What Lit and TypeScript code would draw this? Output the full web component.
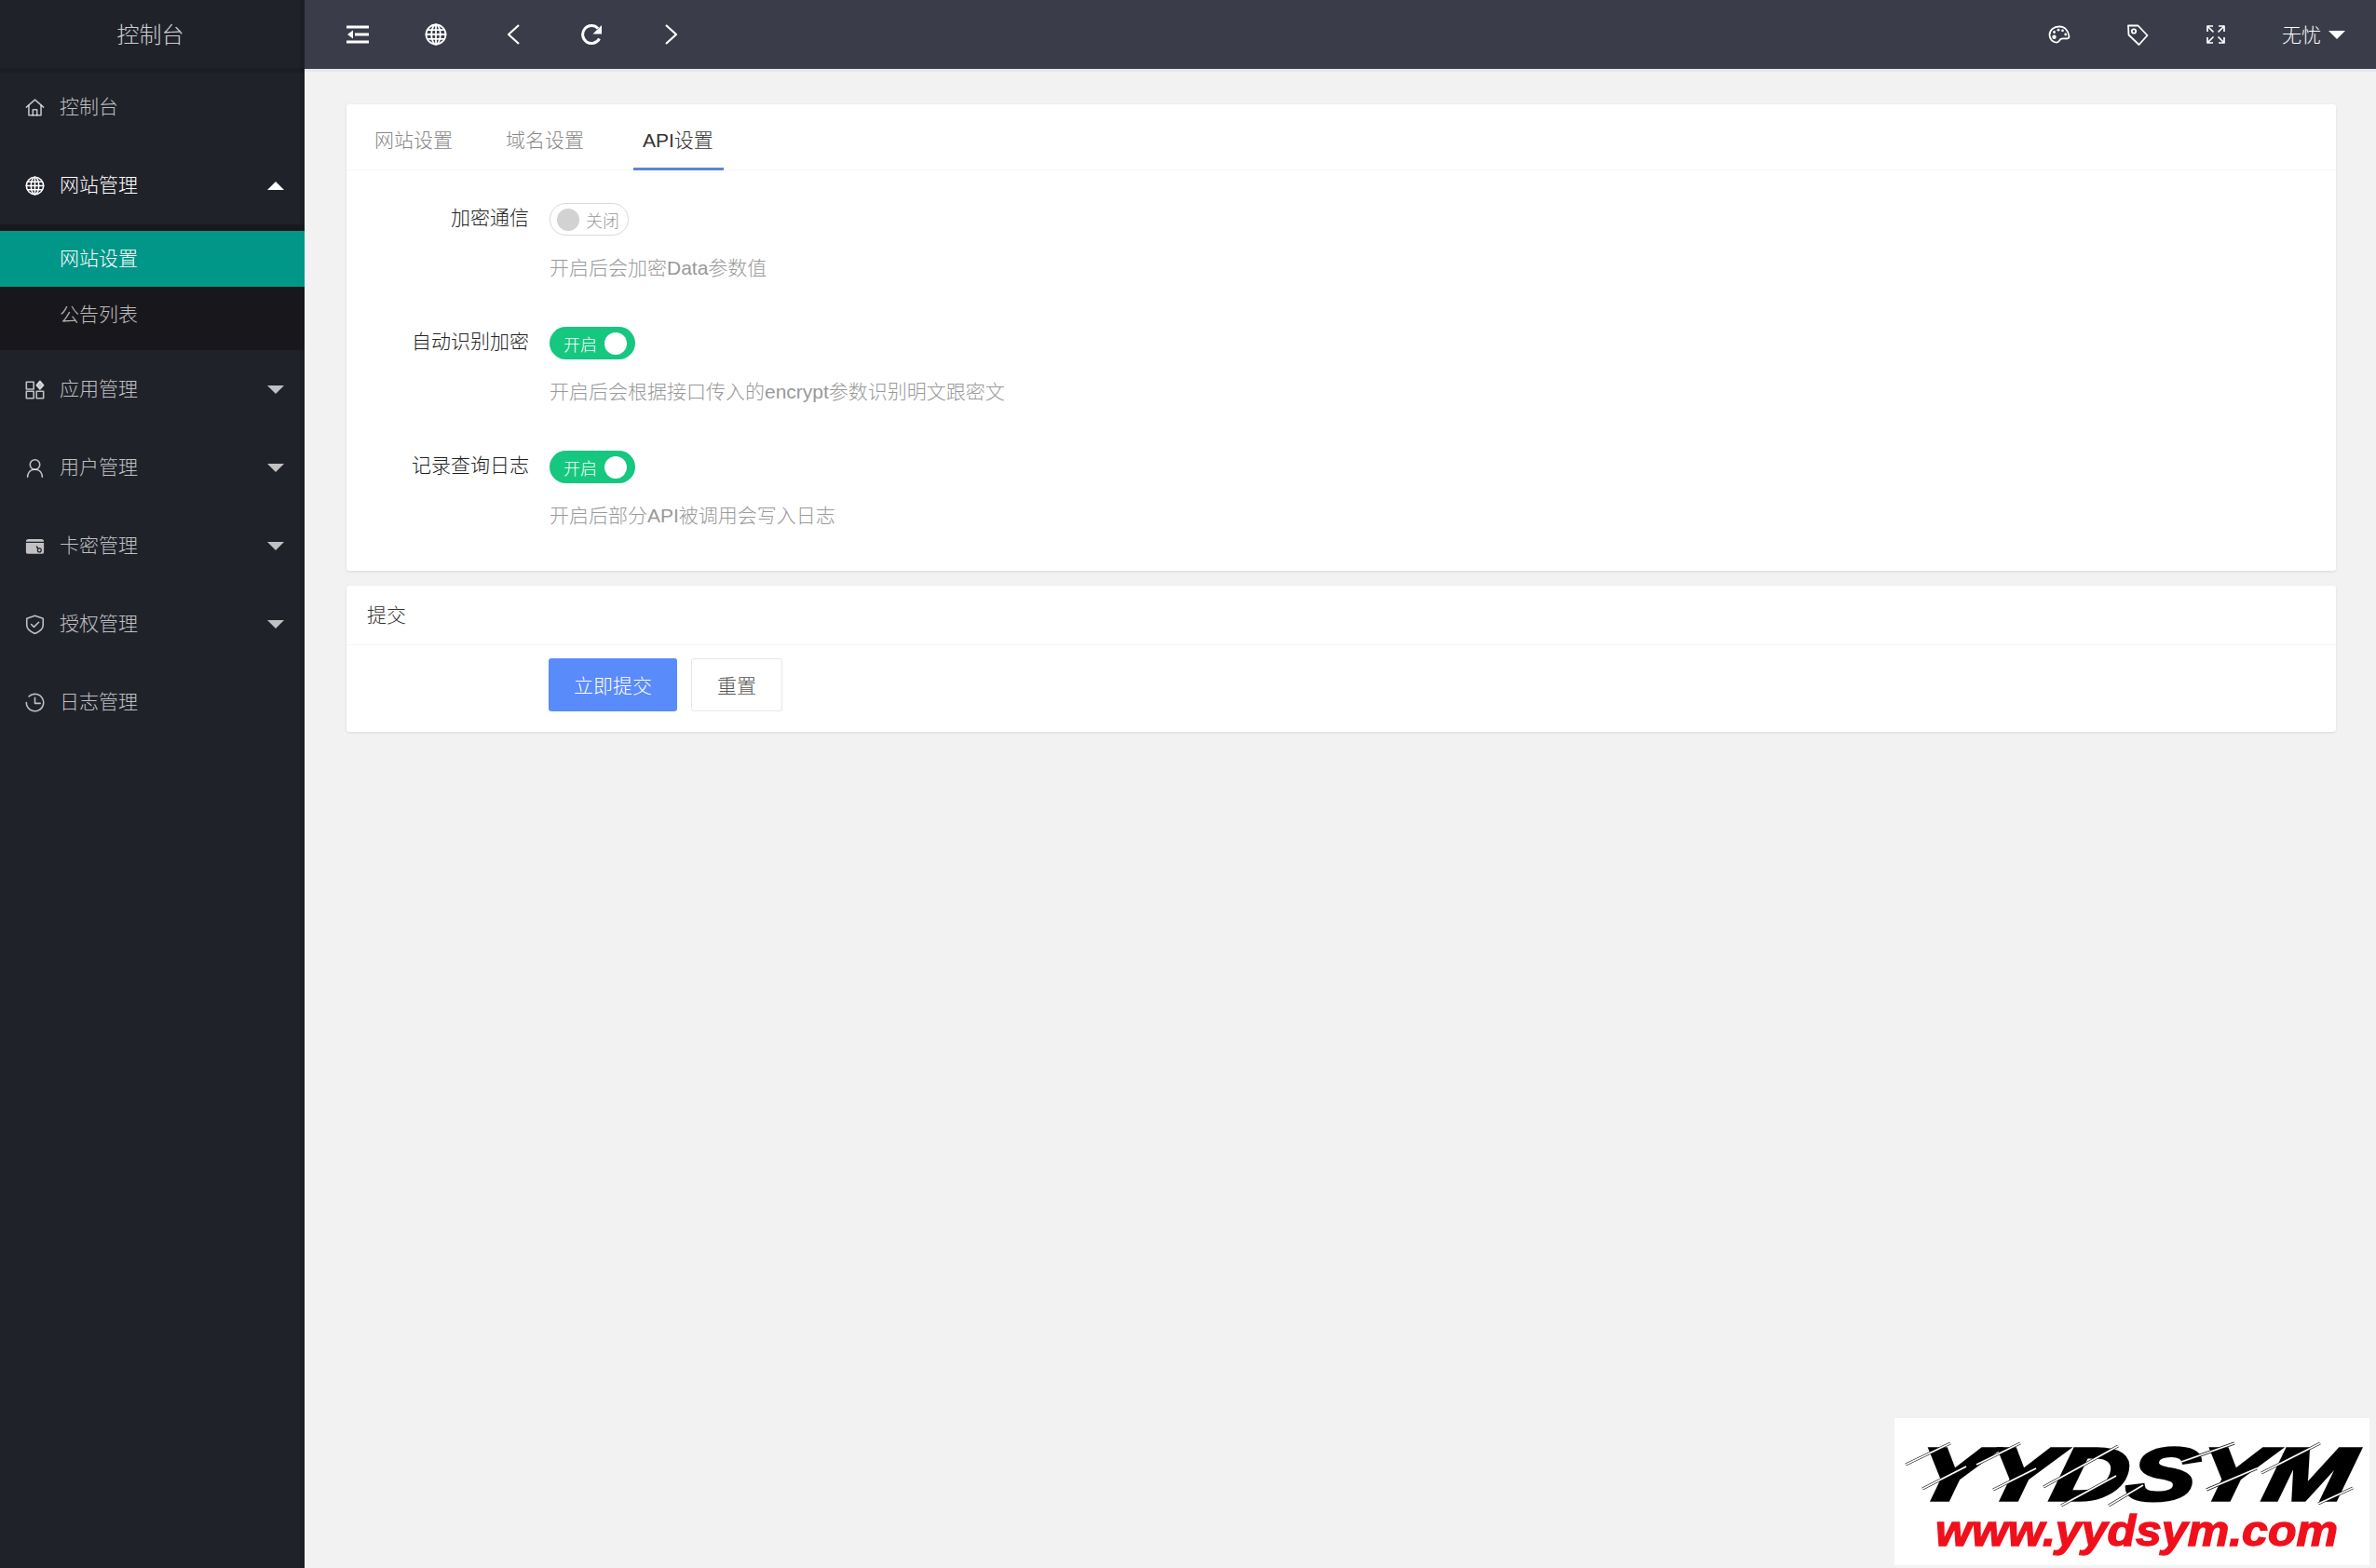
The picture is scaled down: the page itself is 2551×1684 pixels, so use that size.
import { LitElement, html, css, svg } from "lit";
import { customElement } from "lit/decorators.js";

const ic = (body: unknown, cls = "ic") => html`<svg class=${cls} viewBox="0 0 24 24" fill="none" stroke="currentColor" stroke-width="1.8" stroke-linecap="round" stroke-linejoin="round">${body}</svg>`;

const icons: Record<string, unknown> = {
  home: svg`<path d="M1.500 11.500 12 2.500l10.500 9"/><path d="M4.500 9.500V21.500h15V9.500"/><path d="M9.500 21.500v-7h5v7"/>`,
  globe: svg`<circle cx="12" cy="12" r="10.500"/><ellipse cx="12" cy="12" rx="4.800" ry="10.500"/><path d="M1.500 12h21M3 7.200h18M3 16.800h18M12 1.500v21"/>`,
  apps: svg`<rect x="1.500" y="2.500" width="9" height="9"/><rect x="1.500" y="14" width="9" height="8.500"/><rect x="14" y="14" width="8.500" height="8.500"/><path d="M18.200 1.500l4.300 5-4.300 5-4.300-5z" fill="currentColor"/>`,
  user: svg`<circle cx="12" cy="8" r="6"/><path d="M3 23c.4-5.500 3.800-9 9-9s8.600 3.500 9 9"/>`,
  shield: svg`<path d="M12 1.500l10 3.400v8.300c0 4.700-4.200 7.700-10 10.300-5.800-2.600-10-5.600-10-10.300V4.900z"/><path d="M7.500 12l3.300 3.300 5.900-5.800"/>`,
  clock: svg`<path d="M4.700 4.500A10.500 10.500 0 1 1 1.500 12"/><path d="M12 6v7h6.500"/>`,
  shrink: svg`<g stroke="none" fill="currentColor"><rect x="0" y="2.500" width="24" height="3"/><rect x="0" y="18.500" width="24" height="3"/><rect x="9" y="10.500" width="15" height="3"/><path d="M1 12l6-4.500v9z"/></g>`,
  left: svg`<path d="M17 2 6 12l11 10" stroke-width="2.200" stroke-linecap="butt"/>`,
  right: svg`<path d="M7 2l11 10L7 22" stroke-width="2.200" stroke-linecap="butt"/>`,
  refresh: svg`<path d="M19.500 16.500A9.500 9.500 0 1 1 18 5.500" stroke-width="3" stroke-linecap="butt"/><path d="M22 2v9.500h-9.500z" fill="currentColor" stroke="none"/>`,
  palette: svg`<path d="M12 3.500C5.800 3.500 1.500 7.600 1.500 12.600c0 4.800 3.700 8 7.600 8 2.700 0 2.800-2.400 4.300-3.500 2-1.400 4.500-.2 7.300-.7 1.300-.3 2-1.200 1.700-2.800C21.500 8 17.800 3.500 12 3.500z"/><g fill="currentColor" stroke="none"><circle cx="6.500" cy="14.800" r="2.200"/><circle cx="6.500" cy="9.500" r="1.400"/><circle cx="11" cy="7.200" r="1.400"/><circle cx="15.500" cy="7.800" r="1.400"/><circle cx="18.700" cy="12" r="1.400"/></g>`,
  tag: svg`<path d="M2 2.500h10.500L22.500 13 13.500 23 2.500 12.500z"/><circle cx="8" cy="8.500" r="2.200"/>`,
  full: svg`<g stroke-width="1.700" stroke-linecap="butt"><path d="M3 9V3h6M3 3l6.500 6.500"/><path d="M21 9V3h-6M21 3l-6.500 6.500"/><path d="M3 15v6h6M3 21l6.500-6.500"/><path d="M21 15v6h-6M21 21l-6.500-6.500"/></g>`,
  card: svg`<path d="M1 6.500a3 3 0 0 1 3-3h16a3 3 0 0 1 3 3H1z" fill="currentColor" stroke="none"/><path d="M1 8h22v11a2.500 2.500 0 0 1-2.500 2.500h-17A2.500 2.500 0 0 1 1 19z" fill="currentColor" stroke="none"/><circle cx="17.500" cy="17" r="2.200" stroke="#20222a" stroke-width="1.400"/><path d="M16 15l-1.800-2.700M14.300 14l1-.6" stroke="#20222a" stroke-width="1.300"/>`,
};

type Item = { icon: string; label: string; caret?: "up" | "down"; open?: boolean; subs?: { label: string; active?: boolean }[] };
const nav: Item[] = [
  { icon: "home", label: "控制台" },
  { icon: "globe", label: "网站管理", caret: "up", open: true, subs: [{ label: "网站设置", active: true }, { label: "公告列表" }] },
  { icon: "apps", label: "应用管理", caret: "down" },
  { icon: "user", label: "用户管理", caret: "down" },
  { icon: "card", label: "卡密管理", caret: "down" },
  { icon: "shield", label: "授权管理", caret: "down" },
  { icon: "clock", label: "日志管理" },
];

const rows = [
  { label: "加密通信", on: false, text: "关闭", help: "开启后会加密Data参数值" },
  { label: "自动识别加密", on: true, text: "开启", help: "开启后会根据接口传入的encrypt参数识别明文跟密文" },
  { label: "记录查询日志", on: true, text: "开启", help: "开启后部分API被调用会写入日志" },
];

const slashes: [number, number, number, number][] = [
  [12, 50, 60, 27], [30, 76, 77, 52], [88, 50, 135, 27], [106, 77, 152, 54],
  [160, 74, 240, 30], [179, 94, 238, 62], [230, 94, 267, 72], [308, 47, 365, 27],
  [335, 77, 389, 54], [394, 59, 457, 27], [455, 92, 492, 75],
];

@customElement("app-root")
export class AppRoot extends LitElement {
  static styles = css`
    :host { display: block; width: 2551px; height: 1684px; overflow: hidden; position: relative; background: #f2f2f2;
      font-family: "Liberation Sans", "Noto Sans CJK SC", sans-serif; font-size: 21px; font-weight: 300; }
    .layout { display: flex; height: 100%; }
    .side { width: 327px; flex: none; background: #20222a; color: rgba(255,255,255,.72); box-shadow: inset -5px 0 0 rgba(0,0,0,.1); }
    .logo { height: 73px; display: flex; align-items: center; justify-content: center; font-size: 24px; color: rgba(255,255,255,.8); padding: 0 4px 3px 0; box-sizing: border-box; box-shadow: 0 5px 0 rgba(0,0,0,.1); }
    .item { height: 84px; display: flex; align-items: center; padding-left: 27px; position: relative; }
    .item span, .sub span { position: relative; top: -2px; }
    .item.open { color: #fff; }
    .ic { width: 21px; height: 21px; flex: none; margin-right: 16px; }
    .caret { position: absolute; left: 287px; width: 0; height: 0; border-left: 9px solid transparent; border-right: 9px solid transparent; }
    .caret.down { border-top: 9px solid currentColor; }
    .caret.up { border-bottom: 9px solid currentColor; }
    .subs { background: #18181c; padding: 7px 0 8px; }
    .sub { height: 60px; display: flex; align-items: center; padding-left: 64px; }
    .sub.active { background: #009688; color: #fff; }
    .main { flex: 1; display: flex; flex-direction: column; min-width: 0; }
    .top { height: 74px; flex: none; background: #3a3d49; display: flex; align-items: center; color: #fff; border-bottom: 3px solid #e4e7f0; box-sizing: content-box; }
    .cell { width: 84px; display: flex; justify-content: center; flex: none; }
    .cell .ic { margin: 0; width: 24px; height: 24px; }
    .cell.first { margin-left: 15px; }
    .spacer { flex: 1; }
    .user { display: flex; align-items: center; gap: 8px; margin-left: 29px; margin-right: 33px; font-size: 21px; }
    .user span { position: relative; top: -1px; }
    .user i { width: 0; height: 0; border-left: 9px solid transparent; border-right: 9px solid transparent; border-top: 9px solid #fff; }
    .content { padding: 35px 43px 0 45px; display: flex; flex-direction: column; gap: 14px; color: #333; }
    .card { background: #fff; border-radius: 3px; box-shadow: 0 1px 3px rgba(0,0,0,.1); }
    .tabs { display: flex; height: 70px; padding-left: 20px; border-bottom: 1px solid #f6f6f6; box-sizing: content-box; }
    .tab { padding: 4px 10px 0; display: flex; align-items: center; color: #888; margin-right: 37px; position: relative; }
    .tab.cur { color: #333; margin-left: 6px; }
    .tab.cur::after { content: ""; position: absolute; left: 0; right: -1px; bottom: -1px; height: 3px; background: #5b86d6; }
    .body { padding: 35px 0 43px; display: flex; flex-direction: column; gap: 47px; }
    .row { display: grid; grid-template-columns: 196px auto; column-gap: 21px; row-gap: 17px; justify-items: start; }
    .label { justify-self: end; color: #222; line-height: 35px; margin-top: -2px; height: 35px; }
    .help { grid-column: 2; line-height: 34px; color: #999; position: relative; top: 1px; margin-left: 1px; }
    .sw { height: 35px; border-radius: 18px; display: flex; align-items: center; box-sizing: border-box; font-size: 18px; margin-left: 1px; }
    .sw.on { width: 92px; background: #16c77f; color: #fff; padding: 0 9px 0 15px; justify-content: space-between; }
    .sw.off { width: 85px; border: 1.500px solid #d9d9d9; color: #999; padding-left: 7px; gap: 7px; }
    .sw b { width: 24px; height: 24px; border-radius: 50%; background: #fff; display: block; flex: none; }
    .sw.off b { background: #d2d2d2; }
    .chead { height: 64px; display: flex; align-items: center; padding: 0 0 4px 22px; box-sizing: border-box; border-bottom: 1px solid #f6f6f6; color: #333; }
    .cbody { display: flex; padding: 14px 0 22px 217px; gap: 15px; }
    .btn { height: 57px; display: flex; align-items: center; justify-content: center; border-radius: 3px; box-sizing: border-box; padding-bottom: 2px; }
    .btn.pri { width: 138px; background: #5a8bfa; color: #fff; }
    .btn.def { width: 98px; background: #fff; border: 1px solid #e6e6e6; color: #555; }
    .content .second { margin-top: 2px; }
    .mark { position: absolute; left: 2034px; top: 1523px; width: 510px; height: 158px; background: #fff; }
    .mark svg { display: block; width: 100%; height: 100%; }
  `;

  render() {
    return html`<div class="layout">
      <aside class="side">
        <div class="logo">控制台</div>
        ${nav.map(n => html`
          <div class="item ${n.open ? "open" : ""}">${ic(icons[n.icon])}<span>${n.label}</span>${n.caret ? html`<i class="caret ${n.caret}"></i>` : ""}</div>
          ${n.subs ? html`<div class="subs">${n.subs.map(s => html`<div class="sub ${s.active ? "active" : ""}"><span>${s.label}</span></div>`)}</div>` : ""}
        `)}
      </aside>
      <div class="main">
        <header class="top">
          <div class="cell first">${ic(icons.shrink)}</div>
          <div class="cell">${ic(icons.globe)}</div>
          <div class="cell">${ic(icons.left)}</div>
          <div class="cell">${ic(icons.refresh)}</div>
          <div class="cell">${ic(icons.right)}</div>
          <div class="spacer"></div>
          <div class="cell">${ic(icons.palette)}</div>
          <div class="cell">${ic(icons.tag)}</div>
          <div class="cell">${ic(icons.full)}</div>
          <div class="user"><span>无忧</span><i></i></div>
        </header>
        <div class="content">
          <section class="card">
            <div class="tabs">
              <div class="tab">网站设置</div>
              <div class="tab">域名设置</div>
              <div class="tab cur">API设置</div>
            </div>
            <div class="body">
              ${rows.map(r => html`<div class="row">
                <div class="label">${r.label}</div>
                ${r.on
                  ? html`<div class="sw on"><span>${r.text}</span><b></b></div>`
                  : html`<div class="sw off"><b></b><span>${r.text}</span></div>`}
                <div class="help">${r.help}</div>
              </div>`)}
            </div>
          </section>
          <section class="card second">
            <div class="chead">提交</div>
            <div class="cbody">
              <div class="btn pri">立即提交</div>
              <div class="btn def">重置</div>
            </div>
          </section>
        </div>
      </div>
    </div>
    <div class="mark">
      <svg viewBox="0 0 510 158">
        <g transform="translate(18 88) skewX(-12)">
          <text x="0" y="0" font-family="Liberation Sans" font-weight="700" font-style="italic" font-size="80" textLength="468" lengthAdjust="spacingAndGlyphs" fill="#000" stroke="#000" stroke-width="3.500">YYDSYM</text>
        </g>
        ${slashes.map(([a, b, c, d]) => svg`<line x1=${a} y1=${b} x2=${c} y2=${d} stroke="#111" stroke-width="3"/><line x1=${a} y1=${b} x2=${c} y2=${d} stroke="#fff" stroke-width="1.600"/>`)}
        <text x="44" y="137" font-family="Liberation Sans" font-weight="700" font-style="italic" font-size="47" textLength="432" lengthAdjust="spacingAndGlyphs" fill="#f0101c" stroke="#f0101c" stroke-width="1.400">www.yydsym.com</text>
      </svg>
    </div>`;
  }
}
